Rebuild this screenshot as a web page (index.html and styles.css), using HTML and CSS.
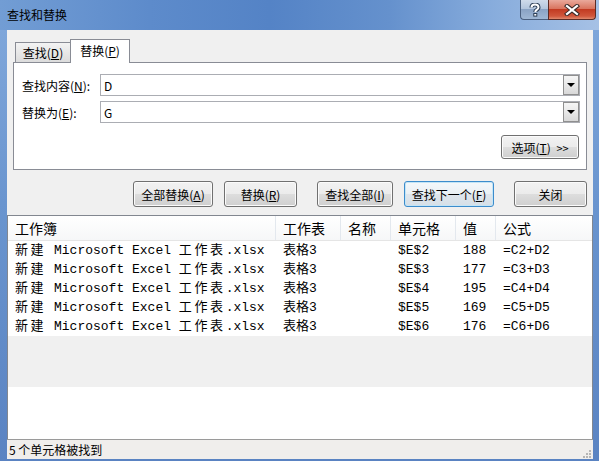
FILE: index.html
```html
<!DOCTYPE html>
<html lang="zh-CN">
<head>
    <meta charset="UTF-8">
    <title>查找和替换</title>
    <link rel="stylesheet" href="styles.css">
</head>
<body>
    <div class="window">
        <!-- Title bar -->
        <div class="titlebar">
            <span class="title">查找和替换</span>
            <div class="caption-btns">
                <div class="cap help">
                    <svg width="12" height="14" viewBox="0 0 12 14">
                        <path d="M2.5 4.5 Q2.5 1.5 6 1.5 Q9.5 1.5 9.5 4.3 Q9.5 6 7.5 7 Q6.3 7.6 6.3 9" fill="none" stroke="#2c3e55" stroke-width="4"/>
                        <path d="M2.5 4.5 Q2.5 1.5 6 1.5 Q9.5 1.5 9.5 4.3 Q9.5 6 7.5 7 Q6.3 7.6 6.3 9" fill="none" stroke="#fff" stroke-width="2"/>
                        <rect x="4.3" y="10" width="4" height="3.6" fill="#2c3e55"/>
                        <rect x="5.3" y="11" width="2" height="1.6" fill="#fff"/>
                    </svg>
                </div>
                <div class="cap close">
                    <svg width="16" height="12" viewBox="0 0 16 12">
                        <path d="M3 2 L13 10 M13 2 L3 10" stroke="#3a2a28" stroke-width="4.2" stroke-linecap="square"/>
                        <path d="M3 2 L13 10 M13 2 L3 10" stroke="#fff" stroke-width="2.2" stroke-linecap="square"/>
                    </svg>
                </div>
            </div>
        </div>

        <div class="frame">
            <div class="client">
                <!-- Tabs -->
                <div class="tabs">
                    <div class="tab">查找(<u>D</u>)</div>
                    <div class="tab active">替换(<u>P</u>)</div>
                </div>

                <div class="panel">
                    <div class="field">
                        <label>查找内容(<u>N</u>):</label>
                        <div class="combo">
                            <span class="val">D</span>
                            <span class="drop"><i class="arrow"></i></span>
                        </div>
                    </div>
                    <div class="field">
                        <label>替换为(<u>E</u>):</label>
                        <div class="combo">
                            <span class="val">G</span>
                            <span class="drop"><i class="arrow"></i></span>
                        </div>
                    </div>
                    <button class="btn options">选项(<u>T</u>) <span class="more">&gt;&gt;</span></button>
                </div>

                <!-- Action buttons -->
                <div class="actions">
                    <button class="btn w80">全部替换(<u>A</u>)</button>
                    <button class="btn w73 gap-s">替换(<u>R</u>)</button>
                    <button class="btn w76 gap-l">查找全部(<u>I</u>)</button>
                    <button class="btn w90 gap-s default">查找下一个(<u>F</u>)</button>
                    <button class="btn w73 gap-l">关闭</button>
                </div>

                <!-- Results list -->
                <div class="list">
                    <div class="head row-grid">
                        <div>工作簿</div>
                        <div>工作表</div>
                        <div>名称</div>
                        <div>单元格</div>
                        <div>值</div>
                        <div>公式</div>
                    </div>
                    <div class="row row-grid">
                        <div><span class="zh">新建</span> Microsoft Excel <span class="zh">工作表</span>.xlsx</div>
                        <div>表格3</div><div></div><div>$E$2</div><div>188</div><div>=C2+D2</div>
                    </div>
                    <div class="row row-grid">
                        <div><span class="zh">新建</span> Microsoft Excel <span class="zh">工作表</span>.xlsx</div>
                        <div>表格3</div><div></div><div>$E$3</div><div>177</div><div>=C3+D3</div>
                    </div>
                    <div class="row row-grid">
                        <div><span class="zh">新建</span> Microsoft Excel <span class="zh">工作表</span>.xlsx</div>
                        <div>表格3</div><div></div><div>$E$4</div><div>195</div><div>=C4+D4</div>
                    </div>
                    <div class="row row-grid">
                        <div><span class="zh">新建</span> Microsoft Excel <span class="zh">工作表</span>.xlsx</div>
                        <div>表格3</div><div></div><div>$E$5</div><div>169</div><div>=C5+D5</div>
                    </div>
                    <div class="row row-grid">
                        <div><span class="zh">新建</span> Microsoft Excel <span class="zh">工作表</span>.xlsx</div>
                        <div>表格3</div><div></div><div>$E$6</div><div>176</div><div>=C6+D6</div>
                    </div>
                    <div class="filler"></div>
                </div>

                <!-- Status bar -->
                <div class="status">
                    <span>5 个单元格被找到</span>
                    <svg class="grip" width="10" height="10" viewBox="0 0 10 10">
                        <rect x="7" y="1" width="2" height="2" fill="#b5b5b5"/>
                        <rect x="4" y="4" width="2" height="2" fill="#b5b5b5"/>
                        <rect x="7" y="4" width="2" height="2" fill="#b5b5b5"/>
                        <rect x="1" y="7" width="2" height="2" fill="#b5b5b5"/>
                        <rect x="4" y="7" width="2" height="2" fill="#b5b5b5"/>
                        <rect x="7" y="7" width="2" height="2" fill="#b5b5b5"/>
                    </svg>
                </div>
            </div>
        </div>
    </div>
</body>
</html>
```

FILE: styles.css
```css
* {
    box-sizing: border-box;
}
body {
    margin: 0;
    width: 599px;
    height: 461px;
    overflow: hidden;
    font-family: "Noto Sans CJK SC", "Noto Sans", sans-serif;
    font-size: 12px;
    color: #000;
}
u {
    text-decoration: underline;
    text-underline-offset: 1px;
}
.window {
    height: 461px;
    display: flex;
    flex-direction: column;
    background: #34506f;
}

/* Title bar */
.titlebar {
    height: 30px;
    display: flex;
    background: linear-gradient(90deg, #729dd4 0%, #5d8bcb 25%, #5483c6 45%, #6591cd 65%, #87acdc 82%, #a6c1e5 100%);
}
.title {
    padding-left: 7px;
    line-height: 30px;
    font-size: 12px;
}
.caption-btns {
    margin-left: auto;
    margin-right: 3px;
    display: flex;
    align-self: flex-start;
}
.cap {
    height: 20px;
    display: flex;
    align-items: center;
    justify-content: center;
    border: 1px solid #4a5f7e;
    border-top: none;
}
.help {
    width: 28px;
    border-right: none;
    border-bottom-left-radius: 4px;
    background: linear-gradient(180deg, #cfdbea 0%, #b4c6dd 45%, #8aa3c4 50%, #9fb7d4 100%);
}
.close {
    width: 48px;
    border-bottom-right-radius: 4px;
    border-color: #5b2c26;
    background: linear-gradient(180deg, #e9a99b 0%, #d9755f 45%, #c23b22 50%, #d0573c 85%, #e08a6e 100%);
}

/* Window frame */
.frame {
    flex: 1;
    display: flex;
    padding: 0 6px 2px 7px;
    background: linear-gradient(180deg, #7ea6da 0%, #6a95cf 40%, #5a83c2 100%);
}
.client {
    flex: 1;
    display: flex;
    flex-direction: column;
    background: #f0f0f0;
}

/* Tabs */
.tabs {
    height: 32px;
    padding: 9px 0 0 8px;
    display: flex;
    align-items: flex-end;
}
.tab {
    width: 55px;
    height: 20px;
    line-height: 19px;
    text-align: center;
    border: 1px solid #898c95;
    border-bottom: none;
    border-right: none;
    background: linear-gradient(180deg, #f3f3f3, #dcdcdc);
}
.tab.active {
    width: 60px;
    height: 24px;
    line-height: 22px;
    margin-bottom: -1px;
    border-right: 1px solid #898c95;
    background: #fff;
    position: relative;
    z-index: 1;
}

/* Panel */
.panel {
    margin: 0 6px;
    height: 108px;
    border: 1px solid #898c95;
    background: #fff;
    padding: 11px 6px 0 8px;
    display: flex;
    flex-direction: column;
    gap: 5px;
}
.field {
    display: flex;
    align-items: center;
    height: 22px;
}
.field label {
    width: 78px;
}
.combo {
    flex: 1;
    height: 22px;
    border: 1px solid #abadb3;
    display: flex;
    align-items: center;
    padding-left: 3px;
}
.combo .val {
    flex: 1;
    font-size: 12px;
}
.drop {
    width: 16px;
    height: 20px;
    border: 1px solid #8f8f8f;
    background: linear-gradient(180deg, #f6f6f6 0%, #e8e8e8 50%, #d8d8d8 100%);
    display: flex;
    align-items: center;
    justify-content: center;
}
.arrow {
    width: 0;
    height: 0;
    border-left: 4px solid transparent;
    border-right: 4px solid transparent;
    border-top: 4px solid #000;
}

/* Buttons */
.btn {
    height: 26px;
    padding: 0;
    border: 1px solid #707070;
    border-radius: 3px;
    font-family: inherit;
    font-size: 12px;
    color: #000;
    background: linear-gradient(180deg, #f2f2f2 0%, #ebebeb 50%, #dddddd 51%, #cfcfcf 100%);
    box-shadow: inset 0 0 0 1px #fbfbfb;
}
.btn.default {
    border-color: #3c8ccc;
    background: linear-gradient(180deg, #f4f8fb 0%, #eaf0f4 50%, #dfe6ec 51%, #d6dfe7 100%);
    box-shadow: inset 0 0 0 1px #c4e5f6;
}
.options {
    width: 78px;
    height: 24px;
    margin-top: 7px;
    margin-right: 1px;
    align-self: flex-end;
}
.options .more {
    font-size: 11px;
    margin-left: 3px;
}
.actions {
    display: flex;
    justify-content: flex-end;
    margin-top: 11px;
    padding-right: 6px;
}
.w80 { width: 80px; }
.w73 { width: 73px; }
.w76 { width: 76px; }
.w90 { width: 90px; }
.gap-s { margin-left: 11px; }
.gap-l { margin-left: 20px; }

/* Results list */
.list {
    flex: 1;
    margin-top: 8px;
    border: 1px solid #828790;
    border-bottom: none;
    background: #fff;
    display: flex;
    flex-direction: column;
}
.row-grid {
    display: grid;
    grid-template-columns: 268px 65px 50px 65px 40px 1fr;
}
.row-grid > div {
    padding-left: 7px;
    white-space: nowrap;
    overflow: hidden;
}
.head {
    height: 25px;
    font-size: 14px;
    line-height: 24px;
    border-bottom: 1px solid #e5e5e5;
    background: linear-gradient(180deg, #ffffff 0%, #f6f7f8 100%);
}
.head > div {
    border-right: 1px solid #e3e8ee;
}
.head > div:last-child {
    border-right: none;
}
.row {
    height: 19px;
    line-height: 20px;
    font-family: "Liberation Mono", "Noto Sans CJK SC", monospace;
    font-size: 13px;
}
.zh {
    letter-spacing: 2.6px;
}
.filler {
    height: 51px;
    background: #f0f0f0;
}

/* Status bar */
.status {
    height: 20px;
    border-top: 1px solid #9a9a9a;
    background: #f0eeec;
    padding-left: 2px;
    display: flex;
    align-items: center;
    justify-content: space-between;
    font-size: 12px;
    line-height: 19px;
}
.grip {
    align-self: flex-end;
    margin-right: 1px;
}
```
